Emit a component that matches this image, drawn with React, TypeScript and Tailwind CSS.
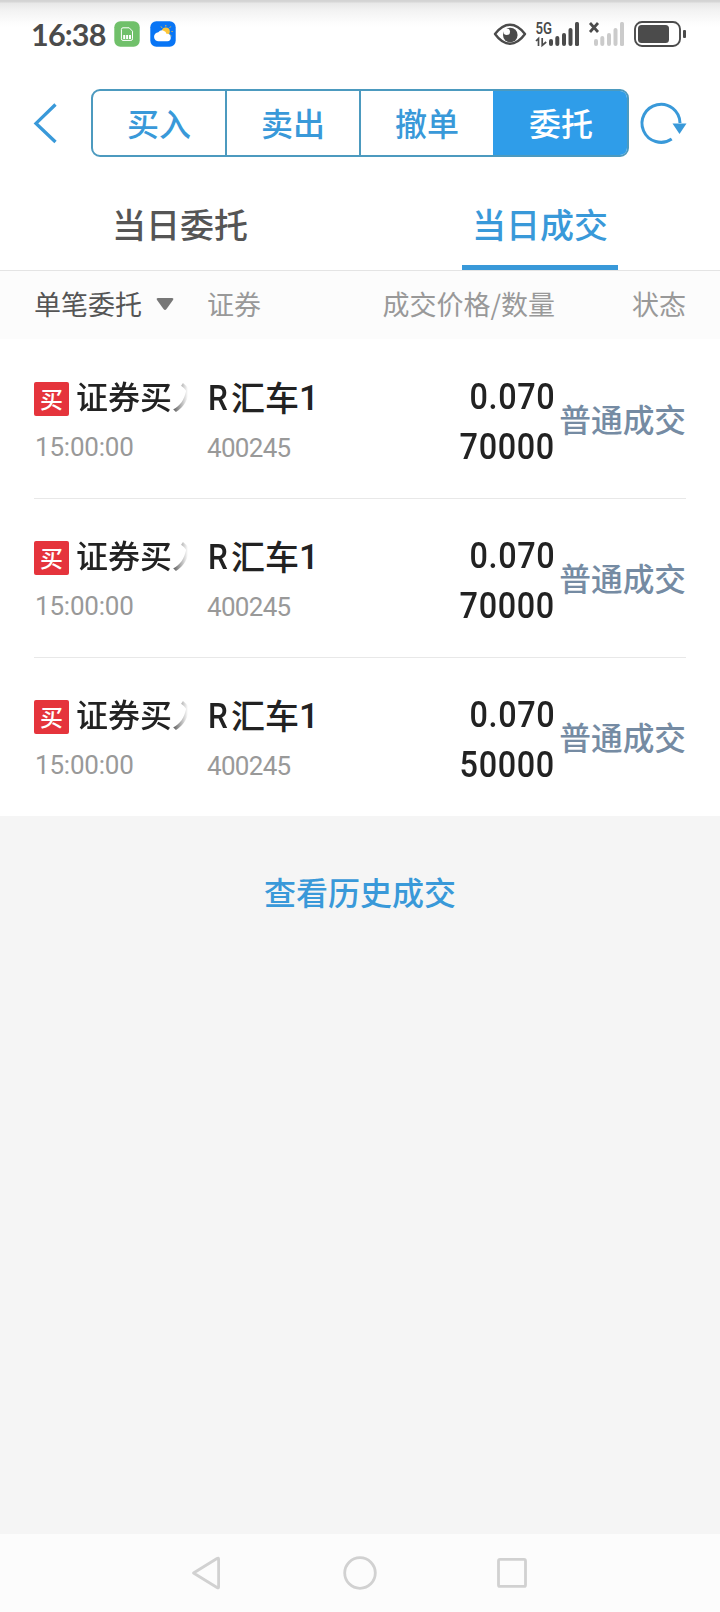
import React from "react";

const orders = [
  { time: "15:00:00", name: ["R", "汇车", "1"], code: "400245", price: "0.070", qty: "70000" },
  { time: "15:00:00", name: ["R", "汇车", "1"], code: "400245", price: "0.070", qty: "70000" },
  { time: "15:00:00", name: ["R", "汇车", "1"], code: "400245", price: "0.070", qty: "50000" },
];

function StatusBar() {
  return (
    <header className="flex h-[68px] items-center bg-[linear-gradient(to_bottom,#d2d2d2_0px,#d6d6d6_2px,#e7e7e7_3px,#f3f3f3_11px,#fcfcfc_22px,#ffffff_28px)] pl-[31px] pr-[34px] text-[#4b4b4b]">
      <span className="w-[83px] whitespace-nowrap font-['Lato',sans-serif] text-[30.5px] leading-[34px] font-bold tracking-[-0.8px]">16:38</span>
      <svg className="h-[26px] w-[26px]" viewBox="0 0 26 26">
        <rect x="0.3" y="0.3" width="25.4" height="25.4" rx="6" fill="#70c06a" />
        <path d="M9 6.8h6.2l3.3 3.4v7.600q0 1.600-1.600 1.600H9q-1.600 0-1.600-1.600V8.400q0-1.600 1.600-1.600z" fill="none" stroke="#fff" strokeWidth="1" />
        <path d="M9.200 14h2v4h-2zM12.100 14h2v4h-2zM15 14h2v4h-2z" fill="#fff" />
      </svg>
      <svg className="ml-[10px] h-[26px] w-[26px]" viewBox="0 0 26 26">
        <rect x="0.300" y="0.300" width="25.400" height="25.400" rx="6" fill="#0875f5" />
        <path d="M15.800 4v1.500M11 5.500l1 1.300M20.700 5.500l-1 1.300M21.500 10.500h1.200M20.300 14l1.200 1" stroke="#f6bd3c" strokeWidth="1" />
        <circle cx="15.800" cy="10.500" r="4" fill="#fcc538" />
        <path d="M8.800 20.300a4.500 4.500 0 0 1-.5-9 4.700 4.700 0 0 1 8.400 1.600 3.700 3.700 0 1 1 .7 7.400z" fill="#fff" />
      </svg>
      <svg className="ml-auto h-[32px] w-[196px]" viewBox="0 0 196 32" fill="none">
        <path d="M5 16Q12 6.700 20 6.700T35 16Q28 25.700 20 25.700T5 16z" stroke="#4b4b4b" strokeWidth="2.400" strokeLinejoin="round" />
        <circle cx="20.300" cy="17" r="7.300" fill="#4b4b4b" />
        <circle cx="16.800" cy="13.800" r="3.300" fill="#fff" />
        <g fill="#4b4b4b">
          <text x="45.500" y="16" fontFamily="Roboto" fontSize="16" fontWeight="600" textLength="16.500" lengthAdjust="spacingAndGlyphs">5G</text>
          <rect x="59" y="21" width="4" height="7" rx="2" />
          <rect x="65.300" y="18" width="4" height="10" rx="2" />
          <rect x="72" y="15" width="4" height="13" rx="2" />
          <rect x="78.500" y="10" width="4" height="18" rx="2" />
          <rect x="85" y="4" width="4" height="24" rx="1.500" />
        </g>
        <path d="M46 23l2.500-2.500V28M52.200 20v7.500l4-3.500" stroke="#4b4b4b" strokeWidth="1.700" />
        <path d="M100 5l8 9M108 5l-8 9" stroke="#4b4b4b" strokeWidth="2.700" />
        <g fill="#cbcbcb">
          <rect x="104" y="21" width="4" height="7" rx="2" />
          <rect x="110.300" y="18" width="4" height="10" rx="2" />
          <rect x="117" y="15" width="4" height="13" rx="2" />
          <rect x="123.500" y="10" width="4" height="18" rx="2" />
          <rect x="130" y="4" width="4" height="24" rx="1.500" />
        </g>
        <rect x="145" y="4" width="45" height="24" rx="7" stroke="#4b4b4b" strokeWidth="1.900" />
        <rect x="148" y="7" width="31" height="18" rx="3.500" fill="#4b4b4b" />
        <rect x="193" y="12" width="3" height="8" rx="1" fill="#4b4b4b" />
      </svg>
    </header>
  );
}

function Toolbar() {
  return (
    <div className="flex h-[110px] items-start pt-[21px]">
      <svg className="h-[68px] w-[91px]" viewBox="0 0 91 68" fill="none">
        <path d="M55.500 15.500L36 34.400L55.500 53" stroke="#3999d9" strokeWidth="3.300" />
      </svg>
      <div className="flex h-[68px] w-[538px] overflow-hidden rounded-[9px] border-2 border-[#4c9abf] text-[32px] leading-[62px] font-medium text-[#3999d9]">
        <button className="w-[134px] border-r-2 border-[#4c9abf] pb-[3px]">买入</button>
        <button className="w-[134px] border-r-2 border-[#4c9abf] pb-[3px]">卖出</button>
        <button className="w-[132px] pb-[3px]">撤单</button>
        <div className="-my-[2px] -mr-[2px] flex flex-1 items-center justify-center bg-[#2f9de9] pb-[3px] text-white">委托</div>
      </div>
      <svg className="h-[68px] w-[91px]" viewBox="0 0 91 68" fill="none">
        <path d="M42.700 50A19 19 0 1 1 51 34" stroke="#3999d9" strokeWidth="3" />
        <path d="M43.500 34.500h14l-7 10.500z" fill="#3999d9" />
      </svg>
    </div>
  );
}

function OrderRow({ order, last }: { order: (typeof orders)[number]; last: boolean }) {
  return (
    <div className={last ? "flex h-[159px]" : "flex h-[159px] bg-[linear-gradient(#e8e8e8,#e8e8e8)] bg-[length:100%_1px] bg-bottom bg-no-repeat"}>
      <div className="w-[174px] pt-[35px]">
        <div className="flex h-[40px] items-center">
          <span className="mt-[8px] flex h-[34px] w-[35px] items-center justify-center rounded-[2px] bg-[#e5343c] pb-[1px] text-[23px] leading-none font-medium text-white">买</span>
          <span className="ml-[7px] w-[112px] overflow-hidden [mask-image:linear-gradient(to_right,#000_82%,transparent_100%)] text-[32px] leading-[40px] font-medium whitespace-nowrap text-[#222]">证券买入</span>
        </div>
        <div className="mt-[14px] pl-[1px] font-['Roboto',sans-serif] text-[26px] leading-[36px] tracking-[-0.200px] text-[#999]">{order.time}</div>
      </div>
      <div className="w-[150px] pt-[37px]">
        <div className="flex h-[40px] items-center whitespace-nowrap text-[#222]">
          <span className="w-[23px] pt-[3px] font-['Roboto',sans-serif] text-[35px] leading-[40px] font-medium">
            <span className="inline-block origin-left scale-x-[0.9]">{order.name[0]}</span>
          </span>
          <span className="text-[34px] leading-[40px] font-medium">{order.name[1]}</span>
          <span className="pt-[3px] font-['Roboto',sans-serif] text-[35px] leading-[40px] font-medium">{order.name[2]}</span>
        </div>
        <div className="mt-[13px] -ml-[1px] font-['Roboto',sans-serif] text-[26px] leading-[36px] tracking-[-0.700px] text-[#999]">{order.code}</div>
      </div>
      <div className="flex w-[197px] flex-col items-end pt-[33px] font-['Roboto',sans-serif] text-[36px] leading-[49.500px] font-medium text-[#222]">
        <span className="origin-right scale-x-[0.9] tracking-[0.700px]">{order.price}</span>
        <span className="origin-right scale-x-[0.9] tracking-[0.700px]">{order.qty}</span>
      </div>
      <div className="flex-1 pt-[58px] text-right text-[31.700px] leading-[40px] font-medium whitespace-nowrap text-[#758ba3]">
        <span className="-ml-[6px]">普通成交</span>
      </div>
    </div>
  );
}

export default function App() {
  return (
    <div className="flex h-[1612px] w-[720px] flex-col overflow-hidden bg-white font-['Noto_Sans_CJK_SC',sans-serif]">
      <StatusBar />
      <Toolbar />
      <nav className="flex h-[93px] border-b border-[#e4e4e4] text-[34px] font-medium">
        <div className="flex w-1/2 items-center justify-center pb-[1px] text-[#555]">当日委托</div>
        <div className="flex w-1/2 justify-center">
          <div className="flex w-[156px] items-center justify-center border-b-[5px] border-[#3999d9] pt-[4px] whitespace-nowrap text-[#3999d9]">当日成交</div>
        </div>
      </nav>
      <div className="flex h-[69px] items-center bg-[linear-gradient(#fcfcfc_68px,#fff_68px)] px-[34px] pb-[3px] text-[27px] leading-[40px] text-[#999]">
        <div className="flex w-[173px] items-center text-[#555]">
          单笔委托
          <svg className="ml-[14px] h-[14px] w-[18px]" viewBox="0 0 18 14"><path d="M2 1h14q2 0 1 2l-6.500 9q-1.500 2-3 0L1 3Q0 1 2 1z" fill="#777" /></svg>
        </div>
        <div className="w-[120px]">证券</div>
        <div className="w-[228px] text-right">成交价格/数量</div>
        <div className="flex-1 text-right">状态</div>
      </div>
      <main className="h-[476px] px-[34px]">
        {orders.map((order, i) => <OrderRow key={i} order={order} last={i === orders.length - 1} />)}
      </main>
      <section className="flex-1 bg-[#f5f5f5] pt-[53px] text-center text-[32px] leading-[44px] font-medium text-[#3999d9]">查看历史成交</section>
      <footer className="h-[78px] bg-[#fcfcfc]">
        <svg className="h-[78px] w-[720px]" viewBox="0 0 720 78" fill="none" stroke="#d1d1d1" strokeWidth="2.800" strokeLinejoin="round">
          <path d="M193.500 39L217 24.500Q218.600 23.500 218.600 25V53Q218.600 54.500 217 53.500z" />
          <circle cx="360" cy="39" r="15.300" />
          <rect x="498.500" y="25.400" width="27" height="27" rx="1.500" />
        </svg>
      </footer>
    </div>
  );
}
